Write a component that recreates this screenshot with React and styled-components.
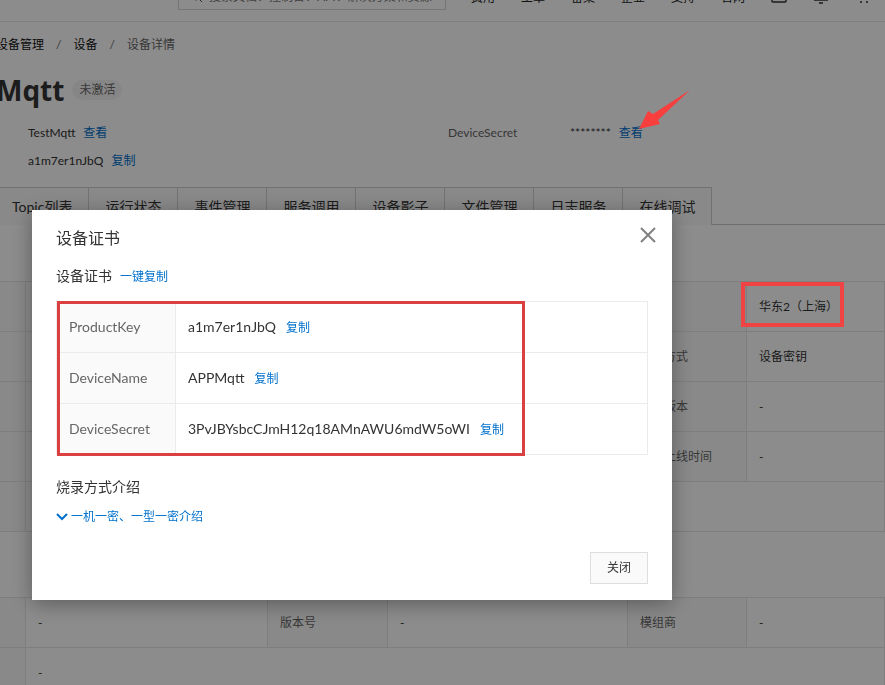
import React from 'react';
import styled, { createGlobalStyle, css } from 'styled-components';

const GlobalStyle = createGlobalStyle`
  *, *::before, *::after { box-sizing: border-box; }
  html, body { margin: 0; overflow: hidden; }
  body {
    background: #fff;
    color: #333;
    font: 12px/20px Lato, "Noto Sans CJK SC", sans-serif;
  }
  button, input { font: inherit; color: inherit; }
`;

const Page = styled.div`
  min-height: 100vh;
  overflow: hidden;
`;

const TopBar = styled.header`
  display: flex;
  align-items: flex-end;
  height: 22px;
  padding: 0 14px 11px 178px;
  border-bottom: 1px solid #e3e3e3;
`;

const Search = styled.label`
  flex: none;
  display: flex;
  align-items: center;
  gap: 6px;
  width: 268px;
  height: 26px;
  padding: 0 8px 0 12px;
  border: 1px solid #d5d5d5;
  color: #555;
`;

const SearchInput = styled.input`
  flex: 1;
  min-width: 0;
  padding: 0;
  border: 0;
  background: none;
  outline: 0;
  &::placeholder { color: #777; opacity: 1; }
`;

const TopNav = styled.nav`
  flex: 1;
  display: flex;
  align-items: flex-end;
  justify-content: space-between;
  padding: 0 0 2px 25px;
`;

const NavLink = styled.a`
  color: #222;
  text-decoration: none;
`;

const NavIcon = styled.svg`
  width: 16px;
  height: 16px;
  margin-bottom: 4px;
  fill: none;
  stroke: #333;
  stroke-width: 1.5;
`;

const Content = styled.main`
  margin-left: -4px;
`;

const Breadcrumb = styled.nav`
  display: flex;
  gap: 12px;
  padding-top: 13px;
  color: #666;
`;

const Crumb = styled.a`
  color: #111;
  text-decoration: none;
`;

const TitleRow = styled.div`
  display: flex;
  align-items: center;
  gap: 8px;
  height: 40px;
  margin-top: 15px;
`;

const Title = styled.h1`
  margin: 0;
  font-family: "Open Sans", "Noto Sans CJK SC", sans-serif;
  font-size: 28px;
  line-height: 40px;
  color: #333;
`;

const Badge = styled.span`
  padding: 0 7px;
  border-radius: 10px;
  background: #f5f5f5;
  color: #666;
`;

const Info = styled.div`
  display: grid;
  grid-template-columns: 420px 122px 1fr;
  grid-auto-rows: 28px;
  align-items: center;
  padding: 9px 0 12px 32px;
`;

const InfoLabel = styled.span`
  color: #666;
`;

const TextButton = styled.button`
  position: relative;
  margin-left: ${(p) => p.$gap ?? 8}px;
  padding: 0;
  border: 0;
  background: none;
  color: #0070cc;
  cursor: pointer;
`;

const Arrow = styled.svg`
  position: absolute;
  z-index: 20;
  left: 20px;
  bottom: 13px;
  width: 51px;
  height: 40px;
  fill: #f93e3e;
`;

const Tabs = styled.div`
  display: flex;
  height: 38px;
  border-top: 1px solid #d0d0d0;
  width: max-content;
`;

const Tab = styled.button`
  padding: 0 16px;
  border: 0;
  border-right: 1px solid #d0d0d0;
  background: #fafafa;
  font-size: 14px;
`;

const Panel = styled.section`
  padding-top: 56px;
  border-top: 1px solid #c8c8c8;
  margin-top: -1px;
`;

const DetailTable = styled.table`
  width: 100%;
  table-layout: fixed;
  border-collapse: collapse;
`;

const Col = styled.col`
  width: ${(p) => p.$w}px;
`;

const cell = css`
  height: 50px;
  padding: 0 12px;
  border: 1px solid #e6e6e6;
  text-align: left;
  font-weight: 400;
`;

const Label = styled.th`
  ${cell}
  background: #fafafa;
  color: #666;
`;

const Value = styled.td`
  ${cell}
`;

const Spacer = styled.div`
  height: 65px;
`;

const Region = styled.span`
  position: relative;
`;

const RegionMark = styled.span`
  position: absolute;
  z-index: 20;
  inset: -17px -6px -13px -18px;
  border: 4px solid #f04444;
`;

const Overlay = styled.div`
  position: fixed;
  z-index: 10;
  inset: 0;
  padding: 210px 32px 0;
  background: rgba(0, 0, 0, 0.45);
`;

const Dialog = styled.section`
  max-width: 640px;
  padding: 16px 24px;
  background: #fff;
  box-shadow: 0 4px 20px rgba(0, 0, 0, 0.35);
`;

const DialogHead = styled.header`
  display: flex;
  align-items: center;
  justify-content: space-between;
  height: 24px;
  margin-bottom: 14px;
`;

const DialogTitle = styled.h2`
  margin: 0;
  font-size: 16px;
  line-height: 24px;
  font-weight: 400;
`;

const CloseIcon = styled.button`
  display: flex;
  padding: 0;
  margin: -6px -8px 0 0;
  border: 0;
  background: none;
  color: #808080;
`;

const SectionTitle = styled.h3`
  margin: 0;
  font-size: 14px;
  line-height: 24px;
  font-weight: 400;
  ${TextButton} { font-size: 12px; }
`;

const KeyBox = styled.div`
  position: relative;
  margin: 12px 0 20px;
`;

const KeyTable = styled(DetailTable)`
  font-size: 14px;
  th, td { border-color: #ebebeb; }
  tr { height: 51px; }
  ${TextButton} { font-size: 12px; }
`;

const KeyMark = styled.span`
  position: absolute;
  inset: 0 auto -1px 1px;
  width: 468px;
  max-width: 100%;
  border: 3px solid #d9403f;
`;

const Expander = styled.button`
  display: flex;
  align-items: center;
  gap: 3px;
  margin-top: 8px;
  padding: 0;
  border: 0;
  background: none;
  color: #0070cc;
`;

const DialogFoot = styled.footer`
  display: flex;
  justify-content: flex-end;
  margin-top: 25px;
`;

const CloseButton = styled.button`
  width: 58px;
  height: 32px;
  padding: 0;
  border: 1px solid #dedede;
  background: #fafafa;
`;

const navLinks = ['费用', '工单', '备案', '企业', '支持', '官网'];
const tabs = ['Topic列表', '运行状态', '事件管理', '服务调用', '设备影子', '文件管理', '日志服务', '在线调试'];
const details = [
  ['地域', '华东2（上海）'],
  ['认证方式', '设备密钥'],
  ['固件版本', '-'],
  ['最后上线时间', '-'],
];
const keys = [
  ['ProductKey', 'a1m7er1nJbQ'],
  ['DeviceName', 'APPMqtt'],
  ['DeviceSecret', '3PvJBYsbcCJmH12q18AMnAWU6mdW5oWI'],
];

const Columns = () => (
  <colgroup>
    <Col $w={29} /><Col $w={242} /><Col $w={120} /><Col $w={240} /><Col $w={119} /><col />
  </colgroup>
);

export default function App() {
  return (
    <Page>
      <GlobalStyle />
      <TopBar>
        <Search>
          <svg width="12" height="12" viewBox="0 0 12 12" fill="none" stroke="currentColor">
            <circle cx="5" cy="5" r="4" /><path d="M8 8l3 3" />
          </svg>
          <SearchInput aria-label="搜索" placeholder="搜索文档、控制台、API、解决方案和资源" />
        </Search>
        <TopNav>
          {navLinks.map((n) => <NavLink key={n} href="#">{n}</NavLink>)}
          <NavIcon viewBox="0 0 16 16"><rect x="1" y="2" width="14" height="12" rx="1" /></NavIcon>
          <NavIcon viewBox="0 0 16 16"><path d="M3 12V7a5 5 0 0 1 10 0v5M1 12h14M6 15h4" /></NavIcon>
          <NavIcon viewBox="0 0 16 16"><path d="M1 1h2l2 10h8l2-7H4M6 13v2M12 13v2" /></NavIcon>
        </TopNav>
      </TopBar>

      <Content>
        <Breadcrumb aria-label="breadcrumb">
          <Crumb href="#">设备管理</Crumb><span>/</span>
          <Crumb href="#">设备</Crumb><span>/</span>
          <span>设备详情</span>
        </Breadcrumb>
        <TitleRow>
          <Title>Mqtt</Title>
          <Badge>未激活</Badge>
        </TitleRow>
        <Info>
          <span>TestMqtt<TextButton>查看</TextButton></span>
          <InfoLabel>DeviceSecret</InfoLabel>
          <span>
            ********
            <TextButton>
              查看
              <Arrow viewBox="0 0 51 40">
                <path d="M0 39L9 21L14 24L51 0L19 30L21 34Z" />
              </Arrow>
            </TextButton>
          </span>
          <span>a1m7er1nJbQ<TextButton>复制</TextButton></span>
        </Info>
        <Tabs role="tablist">
          {tabs.map((t) => <Tab key={t} role="tab">{t}</Tab>)}
        </Tabs>
        <Panel>
          <DetailTable>
            <Columns />
            <tbody>
              {details.map(([label, value], i) => (
                <tr key={label}>
                  <Label /><Value /><Label /><Value />
                  <Label scope="row">{label}</Label>
                  <Value>{i === 0 ? <Region>{value}<RegionMark /></Region> : value}</Value>
                </tr>
              ))}
              <tr><Label /><Value colSpan={5} /></tr>
            </tbody>
          </DetailTable>
          <Spacer />
          <DetailTable>
            <Columns />
            <tbody>
              <tr>
                <Label /><Value>-</Value>
                <Label scope="row">版本号</Label><Value>-</Value>
                <Label scope="row">模组商</Label><Value>-</Value>
              </tr>
              <tr><Label /><Value colSpan={5}>-</Value></tr>
            </tbody>
          </DetailTable>
        </Panel>
      </Content>

      <Overlay>
        <Dialog role="dialog" aria-labelledby="cert-title">
          <DialogHead>
            <DialogTitle id="cert-title">设备证书</DialogTitle>
            <CloseIcon aria-label="关闭">
              <svg width="16" height="16" viewBox="0 0 16 16" stroke="currentColor" strokeWidth="2">
                <path d="M1 1l14 14M15 1L1 15" />
              </svg>
            </CloseIcon>
          </DialogHead>
          <SectionTitle>
            设备证书<TextButton>一键复制</TextButton>
          </SectionTitle>
          <KeyBox>
            <KeyTable>
              <colgroup><Col $w={119} /><col /></colgroup>
              <tbody>
                {keys.map(([k, v]) => (
                  <tr key={k}>
                    <Label scope="row">{k}</Label>
                    <Value>{v}<TextButton $gap={10}>复制</TextButton></Value>
                  </tr>
                ))}
              </tbody>
            </KeyTable>
            <KeyMark />
          </KeyBox>
          <SectionTitle>烧录方式介绍</SectionTitle>
          <Expander aria-expanded="false">
            <svg width="12" height="8" viewBox="0 0 12 8" fill="none" stroke="currentColor" strokeWidth="2">
              <path d="M1 1l5 5l5-5" />
            </svg>
            一机一密、一型一密介绍
          </Expander>
          <DialogFoot><CloseButton>关闭</CloseButton></DialogFoot>
        </Dialog>
      </Overlay>
    </Page>
  );
}
